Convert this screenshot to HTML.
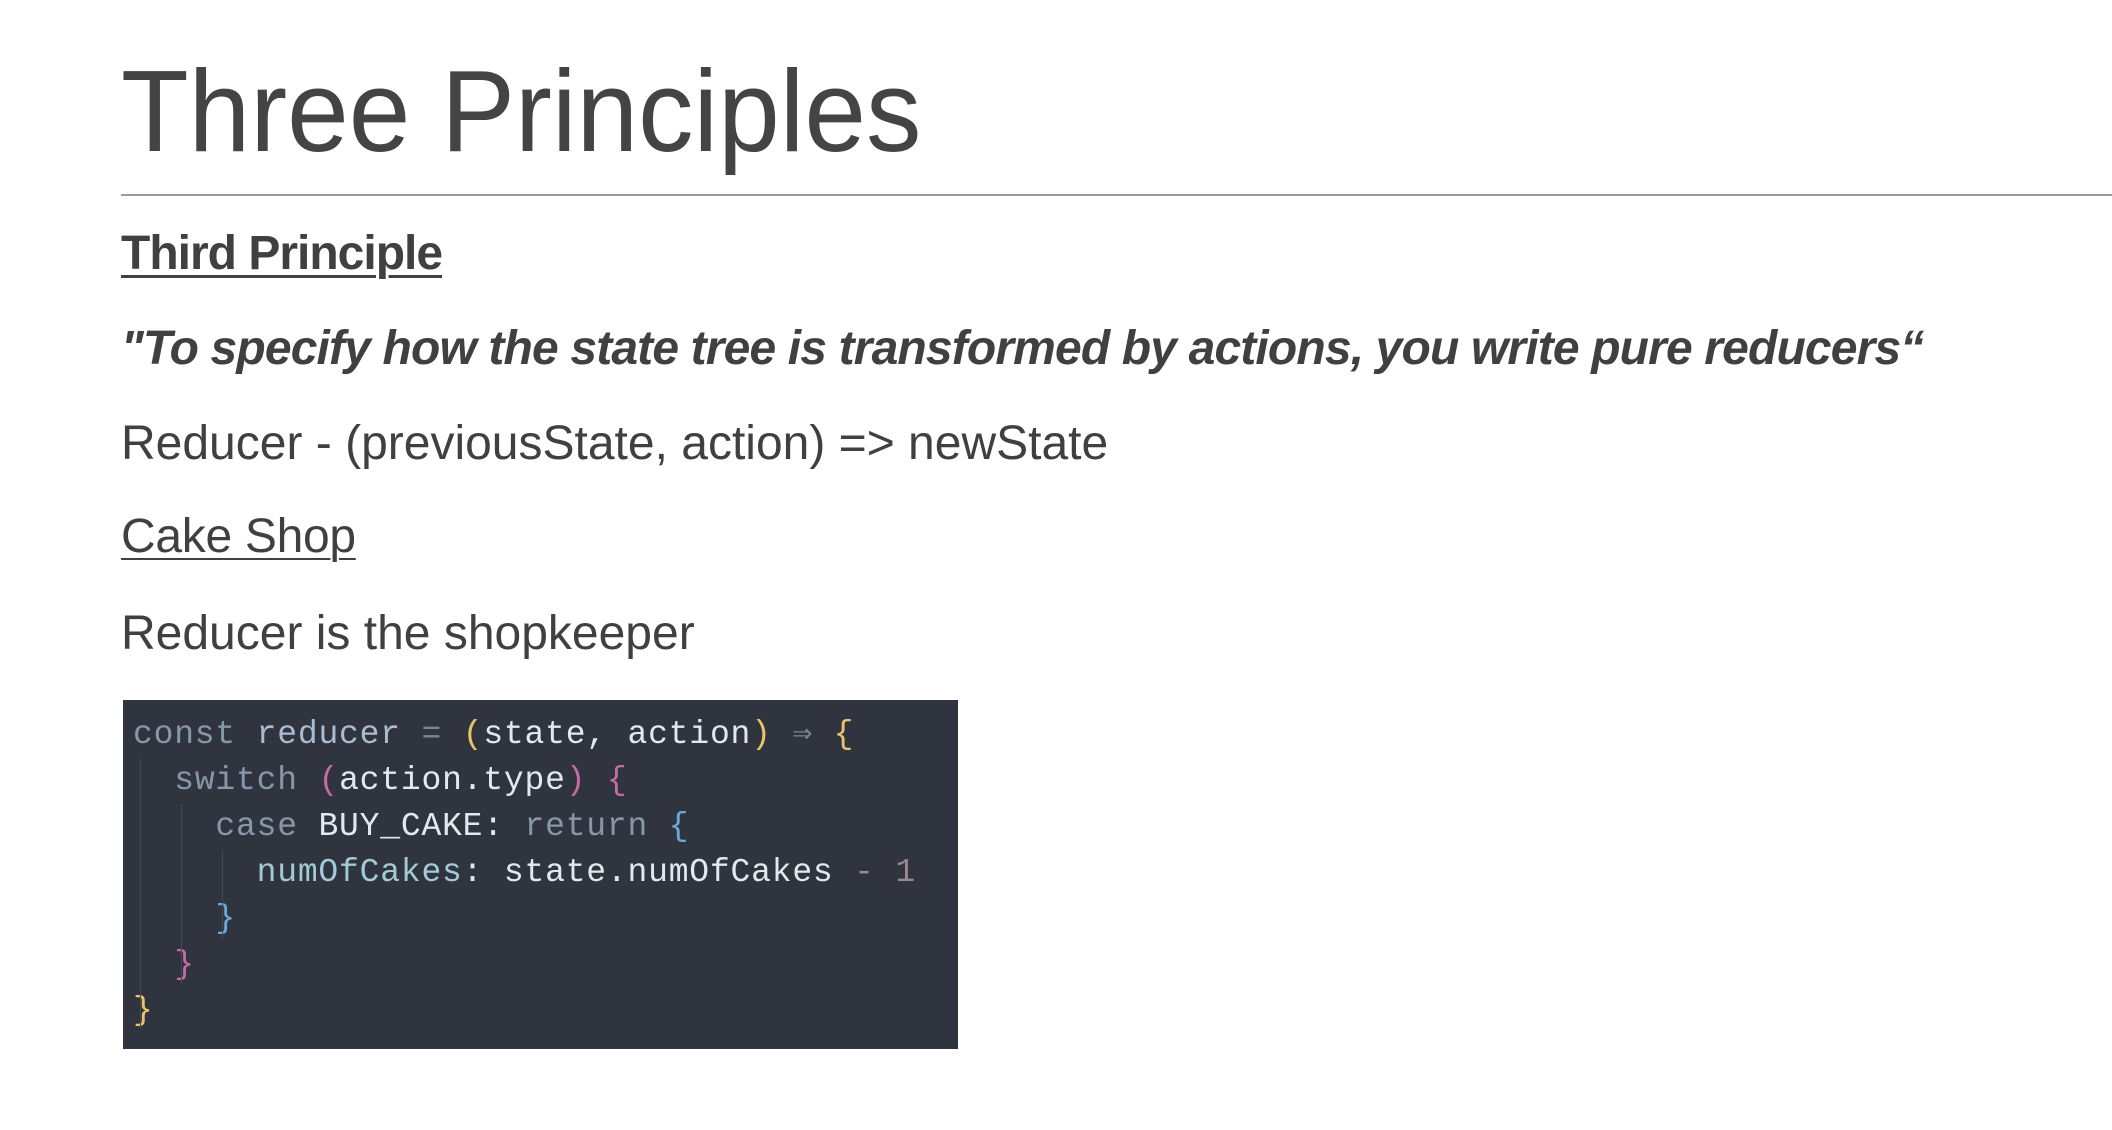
<!DOCTYPE html>
<html><head><meta charset="utf-8"><style>
html,body{margin:0;padding:0;background:#fff;width:2112px;height:1130px;overflow:hidden;position:relative;font-family:"Liberation Sans",sans-serif;color:#404040}
.t{position:absolute;left:121px;line-height:1;white-space:nowrap}
.title{font-size:116px;top:53px;transform:scaleX(0.955);transform-origin:left;color:#444}
.rule{position:absolute;left:121px;right:0;top:194px;height:2px;background:#9a9a9a}
.b{font-size:48px;letter-spacing:0}
.code{position:absolute;left:123px;top:700px;width:835px;height:349px;background:#30343f;box-sizing:border-box;padding:12px 0 0 10px;font-family:"Liberation Mono",monospace;font-size:33px;line-height:46px;white-space:pre;color:#e3e8ef;letter-spacing:0.8px}
.k{color:#8797aa}.f{color:#a9bdd2}.g{color:#7d8594}.y{color:#e9c46a}.m{color:#c56ba6}.bl{color:#6aa9d8}.c{color:#a4c9d6}.n{color:#9c8790}
.guide{position:absolute;width:1px;background:#434857}
</style></head><body>
<div class="t title">Three Principles</div>
<div class="rule"></div>
<div class="t b" style="top:230px;font-weight:bold;letter-spacing:-1px;text-decoration:underline;text-decoration-thickness:3px;text-underline-offset:6px">Third Principle</div>
<div class="t b" style="top:325px;font-weight:bold;font-style:italic;letter-spacing:-0.85px">"To specify how the state tree is transformed by actions, you write pure reducers“</div>
<div class="t b" style="top:420px">Reducer - (previousState, action) =&gt; newState</div>
<div class="t b" style="top:513px;letter-spacing:-0.3px;text-decoration:underline;text-decoration-thickness:2px;text-underline-offset:6px">Cake Shop</div>
<div class="t b" style="top:610px">Reducer is the shopkeeper</div>
<div class="code"><div class="guide" style="left:17px;top:58px;height:270px"></div><div class="guide" style="left:58px;top:104px;height:180px"></div><div class="guide" style="left:99px;top:150px;height:90px"></div><span class="k">const</span> <span class="f">reducer</span> <span class="g">=</span> <span class="y">(</span>state, action<span class="y">)</span> <span class="g">⇒</span> <span class="y">{</span>
  <span class="k">switch</span> <span class="m">(</span>action.type<span class="m">)</span> <span class="m">{</span>
    <span class="k">case</span> BUY_CAKE: <span class="k">return</span> <span class="bl">{</span>
      <span class="c">numOfCakes</span>: state.numOfCakes <span class="n">- 1</span>
    <span class="bl">}</span>
  <span class="m">}</span>
<span class="y">}</span></div>
</body></html>
